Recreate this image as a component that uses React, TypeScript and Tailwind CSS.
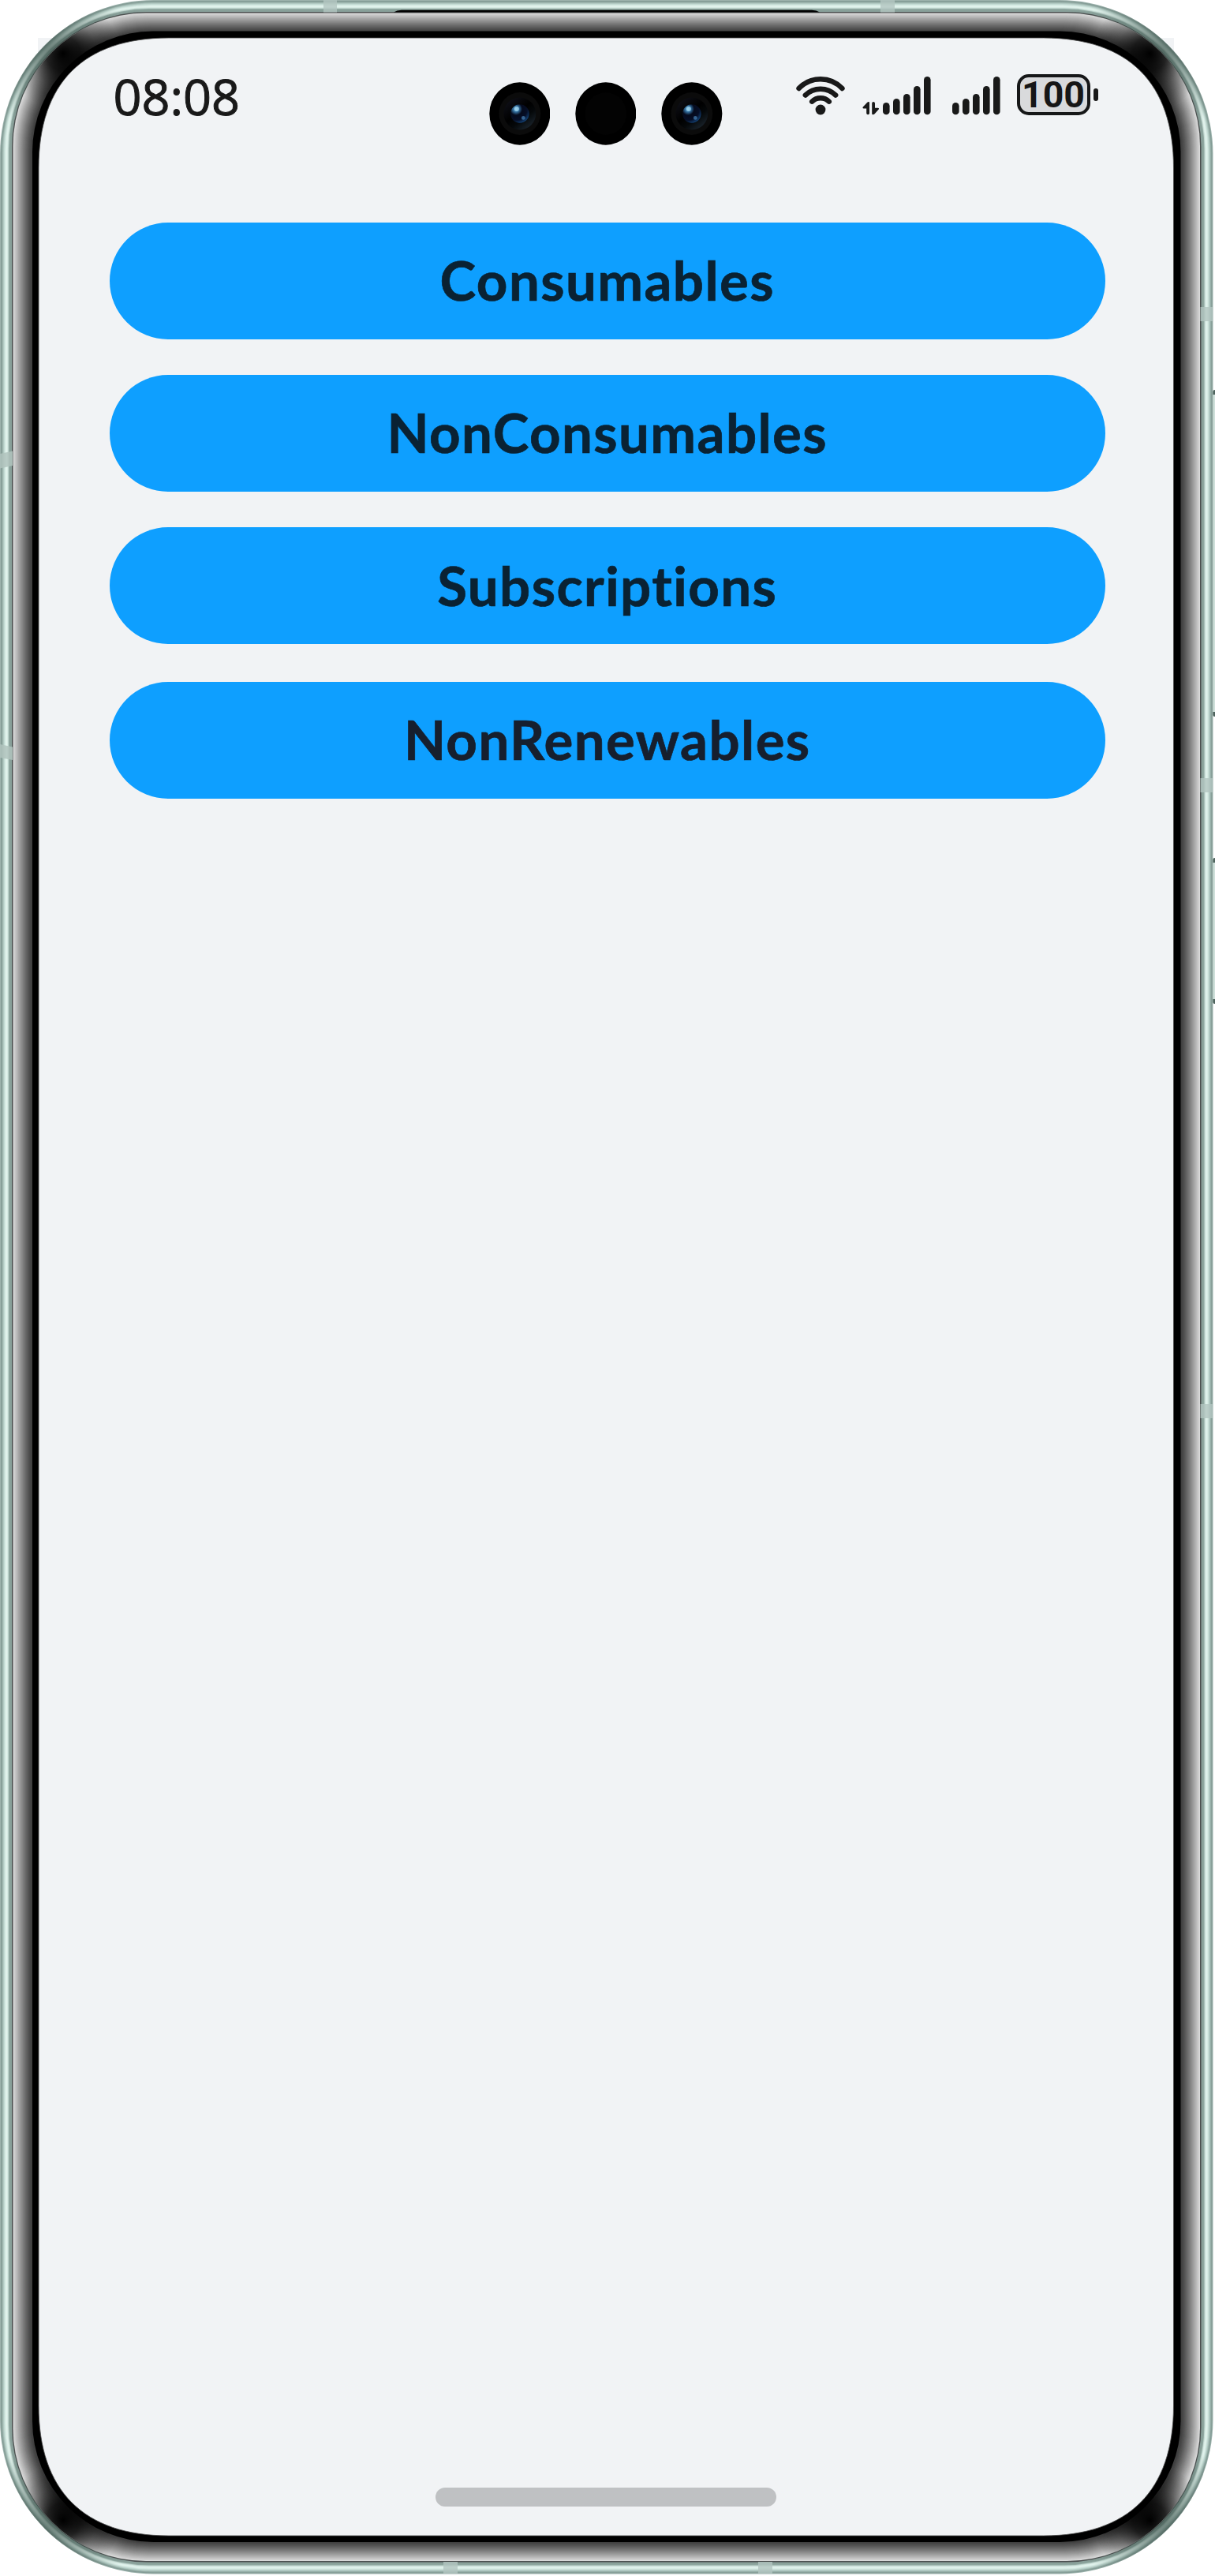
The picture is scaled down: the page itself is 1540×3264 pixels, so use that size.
type Stop = [number, string];

const RIM: Stop[] = [
  [0, "#9db3ad"], [1, "#839b95"], [2, "#8da59e"], [3, "#a0b9b2"], [4, "#b2cac3"],
  [5, "#c3dad3"], [6, "#d3e8e1"], [7, "#def0ea"], [8, "#e2f3ed"], [9, "#d6eae3"],
  [10, "#c0d6cf"], [11, "#92aaa3"], [12, "#8aa29b"], [13, "#879f98"], [14, "#8aa19b"],
  [15, "#4b4f4f"],
];

const BEZEL: Stop[] = Array.from({ length: 24 }, (_, i) => {
  const v = Math.round(64 + 152 * Math.pow(1 - i / 23, 1.15));
  return [16.5 + i, `rgb(${v},${v},${v})`];
});

const radiusAt = (d: number) => (d < 16.5 ? 195 - d * 1.6 : 168.6 - (d - 16.5) * 0.68);

const CORNERS = [[68, 68], [1469.5, 68], [68, 3193.5], [1469.5, 3193.5]];

const ANTENNAS = [
  [410, 0, 17, 15.5], [1116, 0, 18, 15.5],
  [562, 3246, 18, 15.5], [961, 3246, 18, 15.5],
  [1521.5, 389, 16, 18], [1521.5, 986, 16, 18], [1521.5, 1779, 16, 18],
];

function SideKey({ y, h }: { y: number; h: number }) {
  return (
    <g>
      <rect x="1537" y={y} width="6" height={h} rx="3" fill="#4e635d" />
      <rect x="1537" y={y + 6} width="3" height={h - 12} fill="#cfe0da" />
    </g>
  );
}

function Ring({ stop: [d, fill] }: { stop: Stop }) {
  return <rect x={d} y={d} width={1537.5 - 2 * d} height={3261.5 - 2 * d} rx={radiusAt(d)} fill={fill} />;
}

function DeviceFrame() {
  return (
    <svg aria-hidden className="pointer-events-none absolute inset-0 h-full w-full" viewBox="0 0 1540 3264">
      <defs>
        <radialGradient id="shade">
          <stop offset="0" stopColor="#000" />
          <stop offset="0.3" stopColor="#000" stopOpacity="0.82" />
          <stop offset="0.6" stopColor="#000" stopOpacity="0.4" />
          <stop offset="1" stopColor="#000" stopOpacity="0" />
        </radialGradient>
        <radialGradient id="rimShade">
          <stop offset="0" stopColor="#40564f" stopOpacity="0.75" />
          <stop offset="1" stopColor="#40564f" stopOpacity="0" />
        </radialGradient>
        <clipPath id="body">
          <rect x="0" y="0" width="1537.5" height="3261.5" rx="195" />
        </clipPath>
        <clipPath id="glass">
          <rect x="16.5" y="16.5" width="1504.5" height="3228.5" rx="168.6" />
        </clipPath>
      </defs>
      <rect x="48" y="48" width="1440" height="300" fill="#f1f3f5" />
      <SideKey y={494} h={414} />
      <SideKey y={1087} h={185} />
      {RIM.map((stop) => (
        <Ring key={stop[0]} stop={stop} />
      ))}
      <g clipPath="url(#body)">
        {CORNERS.map(([x, y]) => (
          <circle key={`${x}-${y}`} cx={x} cy={y} r="100" fill="url(#rimShade)" />
        ))}
        {ANTENNAS.map(([x, y, w, h]) => (
          <rect key={`${x}-${y}`} x={x} y={y} width={w} height={h} fill="#b3c6c0" opacity="0.8" />
        ))}
        <path d="M0 575 L16 571.5 V590 L0 593.5Z M0 943 L16 946.5 V963 L0 960Z" fill="#b0c3bd" opacity="0.85" />
      </g>
      <path d="M499 15.5 Q503 12.8 509 12.8 H1029 Q1035 12.8 1039 15.5Z" fill="#000" />
      {BEZEL.map((stop) => (
        <Ring key={stop[0]} stop={stop} />
      ))}
      <g clipPath="url(#glass)">
        {CORNERS.map(([x, y]) => (
          <circle key={`${x}-${y}`} cx={x + (x < 700 ? 12 : -12)} cy={y} r="72" fill="url(#shade)" />
        ))}
      </g>
      <rect x="41" y="39.5" width="1455.5" height="3181.5" rx="153" fill="#000" />
      <path
        d="M49 213 C49 105 106 48 214 48 H1322.5 C1430.5 48 1487.5 105 1487.5 213 V3048 C1487.5 3156 1430.5 3213 1322.5 3213 H214 C106 3213 49 3156 49 3048Z"
        fill="#f1f3f5" stroke="#4a4a4a" strokeWidth="0.8"
      />
    </svg>
  );
}

function Lens({ glass = false }: { glass?: boolean }) {
  return (
    <svg className="h-20 w-[78px]" viewBox="0 0 78 80">
      <defs>
        <radialGradient id="lensGlow" cx="0.3" cy="0.25" r="0.8">
          <stop offset="0" stopColor="#7cc4ea" />
          <stop offset="0.22" stopColor="#2f6795" />
          <stop offset="0.42" stopColor="#050a1c" />
          <stop offset="0.75" stopColor="#060e26" />
          <stop offset="1" stopColor="#123e70" />
        </radialGradient>
        <linearGradient id="lensWell" x1="0.1" y1="0" x2="0.9" y2="1">
          <stop offset="0" stopColor="#11121b" />
          <stop offset="0.45" stopColor="#000" />
          <stop offset="0.65" stopColor="#05080a" />
          <stop offset="1" stopColor="#202b35" />
        </linearGradient>
      </defs>
      <ellipse cx="39" cy="40" rx="38.7" ry="39.8" fill="#000" />
      <ellipse cx="39" cy="40" rx="26.5" ry="27" fill={glass ? "#0b0b0b" : "#030303"} />
      {glass && (
        <>
          <circle cx="39" cy="40" r="20.5" fill="url(#lensWell)" />
          <circle cx="39" cy="40" r="11.8" fill="url(#lensGlow)" />
          <circle cx="43.5" cy="45.5" r="2.4" fill="#4f8fc6" opacity="0.65" />
          <circle cx="35" cy="34" r="3" fill="#a9dcf2" opacity="0.7" />
        </>
      )}
    </svg>
  );
}

function WifiIcon() {
  return (
    <svg className="h-[52px] w-[62px]" viewBox="1009.5 94 62 52" fill="none" stroke="#191919" strokeWidth="6.4" strokeLinecap="round">
      <path d="M1013 112 A38 38 0 0 1 1068 112" />
      <path d="M1021.3 120.6 A27.5 27.5 0 0 1 1059.7 120.6" />
      <path d="M1029.7 128.7 A15.5 15.5 0 0 1 1051.3 128.7" />
      <circle cx="1040.5" cy="139" r="6.4" fill="#191919" stroke="none" />
    </svg>
  );
}

const BAR_TOPS = [36, 31, 25, 15, 3];

function Bars() {
  return (
    <svg className="h-[52px] w-[61px]" viewBox="0 0 61 52" fill="#191919">
      {BAR_TOPS.map((top, i) => (
        <rect key={top} x={i * 13} y={top} width="8.6" height={51.3 - top} rx="4.3" />
      ))}
    </svg>
  );
}

function DataArrows() {
  return (
    <svg className="h-[52px] w-[22px]" viewBox="0 0 22 52" fill="#191919">
      <path d="M9 36 Q9 35 8 35 Q7 35 6 36 L0.8 41.5 Q-0.2 43.4 1.8 43.6 H5.2 V49.6 Q5.4 51.3 7.1 51.3 Q9 51.3 9 49.6Z" />
      <path d="M12.2 36.7 Q12.3 35 14 35 Q15.8 35 16 36.7 V42.8 H19.6 Q21.8 43 20.6 44.8 L15.4 50.5 Q14.4 51.3 13.5 51.3 Q12.2 51.2 12.2 50Z" />
    </svg>
  );
}

function Battery() {
  return (
    <div className="flex items-center gap-1">
      <div className="flex h-[52px] w-[93px] items-center justify-center rounded-[15px] border-4 border-[#161718] bg-[#d9dadc] font-[Roboto] text-[46.5px] leading-none font-bold text-[#161616]">
        100
      </div>
      <div className="h-4 w-1.5 rounded-full bg-[#191919]" />
    </div>
  );
}

function StatusBar() {
  return (
    <header className="grid h-[98px] grid-cols-[480.5px_296px_1fr] items-start">
      <div className="-mt-[2.5px] pl-[4.5px] font-['Open_Sans'] text-[63px] leading-[60px] text-[#191919] [-webkit-text-stroke:1px_#191919]">
        08:08
      </div>
      <div className="flex gap-[31.5px] pt-[10px]">
        <Lens glass />
        <Lens />
        <Lens glass />
      </div>
      <div className="flex items-center pl-[93.5px]">
        <WifiIcon />
        <div className="ml-[22px] flex items-center gap-[4px]">
          <DataArrows />
          <Bars />
        </div>
        <div className="ml-[27px]">
          <Bars />
        </div>
        <div className="ml-[20.5px]">
          <Battery />
        </div>
      </div>
    </header>
  );
}

const BUTTON =
  "flex h-[148.5px] w-full items-center justify-center rounded-full bg-[#0e9fff] pb-0.5 text-[69px] leading-none font-bold tracking-[1.4px] [-webkit-text-stroke:0.7px_currentColor]";

export default function App() {
  return (
    <div className="relative h-[3264px] w-[1540px] overflow-hidden bg-white">
      <DeviceFrame />
      <main className="relative flex h-full flex-col pt-[94px] pr-[139.5px] pb-[88px] pl-[139px]">
        <StatusBar />
        <nav className="mt-[89.5px] flex flex-col gap-[44.7px] font-[Lato] text-[#0a2233]">
          <button className={BUTTON}>Consumables</button>
          <button className={BUTTON}>NonConsumables</button>
          <button className={BUTTON}>Subscriptions</button>
          <button className={`${BUTTON} mt-[2.5px] text-[#161f2e]`}>NonRenewables</button>
        </nav>
        <div className="mt-auto ml-[412.5px] h-6 w-[432px] rounded-full bg-[#bfc1c3]" />
      </main>
    </div>
  );
}
